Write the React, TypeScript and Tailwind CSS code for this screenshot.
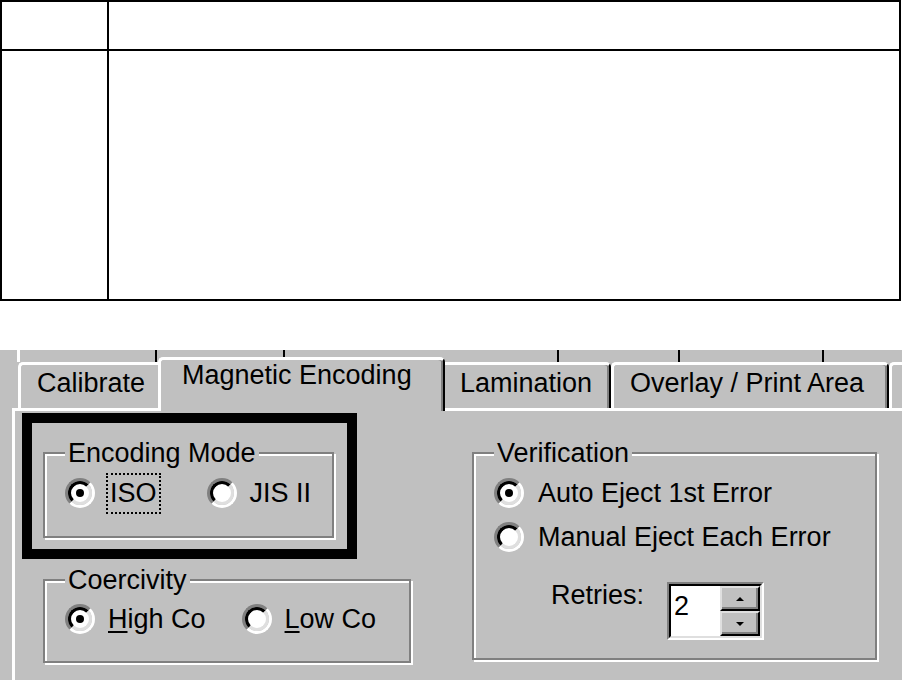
import React from "react";

type RadioProps = { checked?: boolean };

// win9x style radio, scaled up
const Radio = ({ checked }: RadioProps) => (
  <span className="flex h-[30px] w-[30px] shrink-0 rounded-full border-[3px] border-t-[#808080] border-l-[#808080] border-r-white border-b-white">
    <span className="flex flex-1 items-center justify-center rounded-full border-[3px] border-t-black border-l-black border-r-[#dfdfdf] border-b-[#dfdfdf] bg-white">
      {checked && <span className="h-[8px] w-[8px] rounded-full bg-black" />}
    </span>
  </span>
);

type GroupProps = { title: string; className?: string; children: React.ReactNode };

const GroupBox = ({ title, className = "", children }: GroupProps) => (
  <fieldset
    className={`border-2 border-[#808080] pl-[20px] shadow-[inset_2px_2px_0_#ffffff,2px_2px_0_#ffffff] ${className}`}
  >
    <legend className="bg-[#c0c0c0] px-[3px] leading-[30px]">{title}</legend>
    {children}
  </fieldset>
);

const SpinButton = ({ up }: { up?: boolean }) => (
  <div className="flex flex-1 items-center justify-center border-2 border-t-[#dfdfdf] border-l-[#dfdfdf] border-b-black border-r-black bg-[#c0c0c0] shadow-[inset_-2px_-2px_0_#808080]">
    {up ? (
      <span className="h-0 w-0 border-x-[4px] border-b-[4px] border-x-transparent border-b-black" />
    ) : (
      <span className="h-0 w-0 border-x-[4px] border-t-[4px] border-x-transparent border-t-black" />
    )}
  </div>
);

export default function App() {
  return (
    <div className="h-[680px] w-[902px] overflow-hidden bg-white font-['Liberation_Sans',Arial,sans-serif] text-black">
      {/* empty table */}
      <div className="grid h-[301px] w-[901px] grid-cols-[107px_1fr] grid-rows-[49px_1fr] border-2 border-black">
        <div className="border-r-2 border-b-2 border-black" />
        <div className="border-b-2 border-black" />
        <div className="border-r-2 border-black" />
        <div />
      </div>

      {/* dialog screenshot */}
      <div className="mt-[49px] h-[330px] bg-[#c0c0c0] text-[27px]">
        {/* back row of tabs */}
        <div className="flex h-[12px]">
          <div className="w-[17px]" />
          <div className="w-[140px] border-l-[3px] border-r-2 border-l-white border-r-black" />
          <div className="w-[128px] border-r-2 border-r-black" />
          <div className="w-[274px] border-r-2 border-r-black" />
          <div className="w-[121px] border-r-2 border-r-black" />
          <div className="w-[144px] border-r-2 border-r-black" />
        </div>

        {/* front row of tabs */}
        <div className="flex h-[46px] whitespace-nowrap">
          <div className="w-[18px]" />
          <div className="w-[140px] rounded-tl-[5px] border-l-[3px] border-t-[3px] border-l-white border-t-white pl-[16px] pt-[3px] leading-[31px]">
            Calibrate
          </div>
          <div className="relative z-10 -mt-[5px] -mb-[3px] w-[287px] rounded-t-[5px] border-l-[3px] border-t-[3px] border-r-2 border-l-white border-t-white border-r-black bg-[#c0c0c0] pl-[21px] leading-[31px] shadow-[inset_-2px_0_0_#808080]">
            Magnetic Encoding
          </div>
          <div className="w-[166px] rounded-tr-[5px] border-t-[3px] border-r-2 border-t-white border-r-black pl-[15px] pt-[3px] leading-[31px] shadow-[inset_-2px_0_0_#808080]">
            Lamination
          </div>
          <div className="w-[278px] rounded-t-[5px] border-l-[3px] border-t-[3px] border-r-2 border-l-white border-t-white border-r-black pl-[16px] pt-[3px] leading-[31px] shadow-[inset_-2px_0_0_#808080]">
            Overlay / Print Area
          </div>
          <div className="flex-1 rounded-tl-[5px] border-l-[3px] border-t-[3px] border-l-white border-t-white" />
        </div>

        {/* tab page */}
        <div className="ml-[12px] flex h-[272px] border-l-[3px] border-t-[3px] border-l-white border-t-white whitespace-nowrap">
          <div className="flex w-[457px] flex-col">
            <div className="ml-[7px] mt-[2px] h-[146px] w-[335px] border-[10px] border-black pl-[11px] pt-[15px]">
              <GroupBox title="Encoding Mode" className="h-[100px] w-[291px]">
                <div className="mt-[3px] flex h-[44px] items-center">
                  <Radio checked />
                  <span className="ml-[11px] border-2 border-dotted border-black px-[2px] leading-[37px]">ISO</span>
                  <span className="ml-[46px]">
                    <Radio />
                  </span>
                  <span className="ml-[13px]">JIS II</span>
                </div>
              </GroupBox>
            </div>
            <GroupBox title="Coercivity" className="ml-[28px] mt-[6px] h-[98px] w-[368px]">
              <div className="mt-[2px] flex h-[44px] items-center">
                <Radio checked />
                <span className="ml-[13px]">
                  <u className="decoration-2 underline-offset-[3px]">H</u>igh Co
                </span>
                <span className="ml-[36px]">
                  <Radio />
                </span>
                <span className="ml-[13px]">
                  <u className="decoration-2 underline-offset-[3px]">L</u>ow Co
                </span>
              </div>
            </GroupBox>
          </div>

          <GroupBox title="Verification" className="mt-[27px] h-[222px] w-[405px]">
            <div className="mt-[3px] flex h-[44px] items-center">
              <Radio checked />
              <span className="ml-[14px]">Auto Eject 1st Error</span>
            </div>
            <div className="flex h-[44px] items-center">
              <Radio />
              <span className="ml-[14px]">Manual Eject Each Error</span>
            </div>
            <div className="mt-[23px] flex items-start pl-[57px]">
              <span className="leading-[26px]">Retries:</span>
              <div className="ml-[23px] flex h-[58px] w-[97px] border-2 border-t-[#808080] border-l-[#808080] border-b-white border-r-white">
                <div className="flex flex-1 border-2 border-t-black border-l-black border-b-[#dfdfdf] border-r-[#dfdfdf] bg-white">
                  <span className="flex-1 pl-[3px] pt-[5px] leading-[31px]">2</span>
                  <div className="flex w-[40px] flex-col">
                    <SpinButton up />
                    <SpinButton />
                  </div>
                </div>
              </div>
            </div>
          </GroupBox>
        </div>
      </div>
    </div>
  );
}
